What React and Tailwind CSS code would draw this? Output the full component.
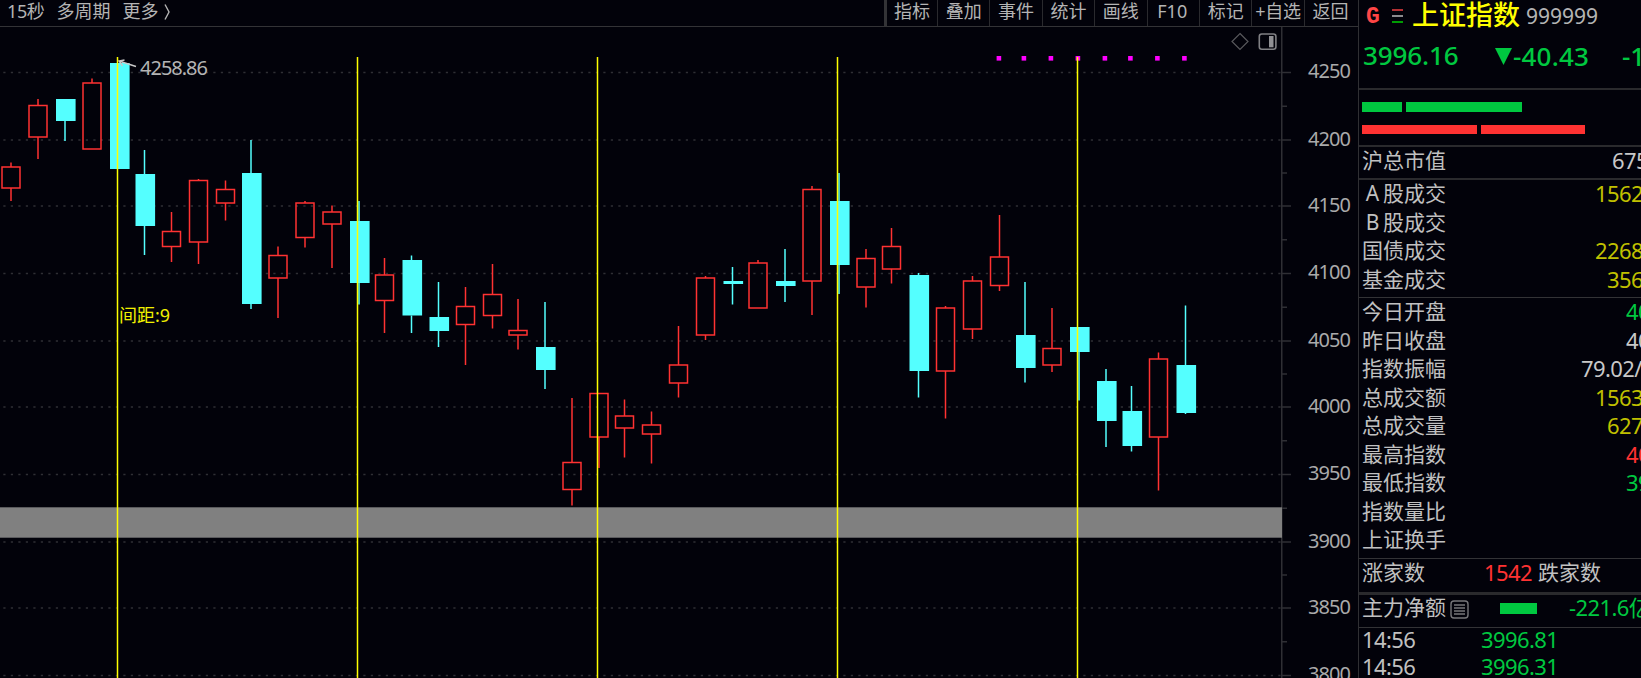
import clsx from 'clsx';

const UP = '#ff3232';
const DOWN = '#54ffff';

// [wick x, high, body top, body bottom, low, rising]
const CANDLES = [
  [11, 162.5, 167, 188, 201, 1],
  [38, 99, 105.5, 137, 159, 1],
  [65, 99, 99, 121, 141, 0],
  [92, 78.5, 83, 149, 149, 1],
  [119, 63, 63, 169, 169, 0],
  [144.5, 150, 174, 226, 255, 0],
  [171.5, 212, 231.5, 246.5, 262, 1],
  [198.5, 179, 180.5, 242, 264, 1],
  [225.5, 180.5, 189.5, 203, 220.5, 1],
  [251, 140, 173, 304, 309, 0],
  [278, 246.5, 255.5, 278, 318, 1],
  [305, 201, 203, 237.5, 247.5, 1],
  [332, 205.5, 212, 224, 268, 1],
  [359, 201, 221, 283, 304.5, 0],
  [384.5, 258, 275, 300.5, 333, 1],
  [411.5, 255.5, 260, 315.5, 333, 0],
  [438.5, 282, 317, 331, 347, 0],
  [465.5, 287, 306.5, 324.5, 365, 1],
  [492.5, 264, 294.5, 315.5, 328.5, 1],
  [518, 299, 330.5, 335, 349.5, 1],
  [545, 302, 347, 370, 389, 0],
  [572, 398, 462.5, 489.5, 505.5, 1],
  [599, 393.5, 393.5, 437, 468, 1],
  [624.5, 399.5, 416, 428, 457.5, 1],
  [651.5, 411.5, 425, 434, 463.5, 1],
  [678.5, 326, 365, 383, 397.5, 1],
  [705.5, 276, 278, 335, 340, 1],
  [732.5, 267, 281, 284, 304.5, 0],
  [758, 260, 263, 308, 308, 1],
  [785, 249, 281, 286, 302, 0],
  [812, 186, 189.5, 281, 315, 1],
  [839, 173, 201, 265, 294, 0],
  [866, 249, 258.5, 287, 307.5, 1],
  [891.5, 228, 246.5, 269, 283.5, 1],
  [918.5, 273, 275, 371, 397.5, 0],
  [945.5, 306, 308, 371, 418.5, 1],
  [972.5, 276, 281, 329, 339, 1],
  [999.5, 215, 257, 285.5, 291, 1],
  [1025, 282, 335, 368, 382.5, 0],
  [1052, 308, 348.5, 365, 372, 1],
  [1079, 327, 327, 352, 400.5, 0],
  [1106, 369, 381, 421, 447, 0],
  [1131.5, 386, 411, 446, 451.5, 0],
  [1158.5, 352.5, 359, 437, 490.5, 1],
  [1185.5, 305.5, 365, 413, 414, 0],
];

const LEVELS = [
  [4250, 72.5],
  [4200, 140],
  [4150, 206],
  [4100, 273.5],
  [4050, 341],
  [4000, 407],
  [3950, 474.5],
  [3900, 542],
  [3850, 608],
  [3800, 675.5],
];

const CYCLES = [117.5, 357.5, 597.5, 837.5, 1077.5];
const DOTS = [999, 1024, 1051, 1078, 1105, 1130.5, 1157.5, 1184.5];

const MENU = ['指标', '叠加', '事件', '统计', '画线', 'F10', '标记', '+自选', '返回'];

const TURNOVER = [
  { label: 'A股成交', value: '1562', cls: 'left-[236px] text-[#c0c000]' },
  { label: 'B股成交' },
  { label: '国债成交', value: '2268', cls: 'left-[236px] text-[#c0c000]' },
  { label: '基金成交', value: '356', cls: 'left-[248px] text-[#c0c000]' },
];

const QUOTES = [
  { label: '今日开盘', value: '40', cls: 'left-[267px] text-[#00c840]' },
  { label: '昨日收盘', value: '40', cls: 'left-[267px] text-[#c8c8c8]' },
  { label: '指数振幅', value: '79.02/', cls: 'left-[222px] text-[#c8c8c8]' },
  { label: '总成交额', value: '1563', cls: 'left-[236px] text-[#c0c000]' },
  { label: '总成交量', value: '627', cls: 'left-[248px] text-[#c0c000]' },
  { label: '最高指数', value: '40', cls: 'left-[267px] text-[#ff3232]' },
  { label: '最低指数', value: '39', cls: 'left-[267px] text-[#00c840]' },
  { label: '指数量比' },
  { label: '上证换手' },
];

const TICKS = [
  ['14:56', '3996.81'],
  ['14:56', '3996.31'],
];

function Candle({ data }) {
  const [x, high, top, bottom, low, rising] = data;
  const color = rising ? UP : DOWN;
  return (
    <g stroke={color} strokeWidth="1.5">
      {high < top && <line x1={x} x2={x} y1={high} y2={top} />}
      {low > bottom && <line x1={x} x2={x} y1={bottom} y2={low} />}
      {rising ? (
        <rect x={x - 9} y={top} width="18" height={bottom - top} fill="none" />
      ) : (
        <rect x={x - 9} y={top} width="19.6" height={bottom - top} fill={color} stroke="none" />
      )}
    </g>
  );
}

function Chart() {
  return (
    <svg className="block shrink-0" width="1358" height="651" viewBox="0 27 1358 651">
      {/* grid and price axis */}
      <g stroke="#2f2f34" strokeWidth="1.5">
        {LEVELS.map(([price, y], i) => (
          <g key={price}>
            <line x1="3.3" x2="1281" y1={y} y2={y} strokeDasharray="2.25 5.25" />
            <line x1="1282" x2="1291" y1={y} y2={y} />
            {i < LEVELS.length - 1 && (
              <line x1="1282" x2="1287" y1={(y + LEVELS[i + 1][1]) / 2} y2={(y + LEVELS[i + 1][1]) / 2} />
            )}
          </g>
        ))}
        <line x1="1281.75" x2="1281.75" y1="27" y2="678" />
      </g>
      <g fill="#aaaaaa" fontSize="20">
        {LEVELS.map(([price, y]) => (
          <text key={price} x="1308" y={y + 5.5} textLength="43">{price}</text>
        ))}
      </g>

      {/* support band */}
      <rect x="0" y="507.3" width="1282" height="30.4" fill="#808080" />

      {CANDLES.map((c) => <Candle key={c[0]} data={c} />)}

      {DOTS.map((x) => (
        <rect key={x} x={x - 2.4} y="56" width="4.6" height="4.6" fill="#ff00ff" />
      ))}

      {CYCLES.map((x) => (
        <line key={x} x1={x} x2={x} y1="57" y2="678" stroke="#ffff00" strokeWidth="1.5" />
      ))}

      <path d="M136 66.5 L119 61 M124.5 60 L119 61 L122.5 66" fill="none" stroke="#c8c8c8" strokeWidth="1.4" />
      <text x="140" y="75" fontSize="20" fill="#b4b4b4" textLength="68">4258.86</text>
      <text x="119" y="322" fontSize="18" fill="#f0f000" textLength="51">间距:9</text>

      <path d="M1240 33.5 L1248 41.5 L1240 49.5 L1232 41.5 Z" fill="none" stroke="#58585c" strokeWidth="1.2" />
      <rect x="1259.3" y="34" width="16.6" height="15.2" rx="2.5" fill="none" stroke="#808084" strokeWidth="1.6" />
      <rect x="1269" y="36" width="4.5" height="11.3" fill="#909094" />
    </svg>
  );
}

function Toolbar() {
  return (
    <div className="flex h-[27px] shrink-0 justify-between border-b border-[#333336] text-[18px] leading-[23px] text-[#b4b4b4]">
      <div className="flex gap-[12px] pl-[7px] whitespace-nowrap">
        <span className="tracking-[-0.4px]">15秒</span>
        <span>多周期</span>
        <span className="flex items-start">
          更多
          <svg className="mt-[3px] ml-[6px]" width="7" height="18" viewBox="0 0 7 18">
            <path d="M1 1.5 L5 9 L1 16.5" fill="none" stroke="#b4b4b4" strokeWidth="1.4" />
          </svg>
        </span>
      </div>
      <div className="flex w-[474px] border-l-[3px] border-[#333336]">
        {MENU.map((item, i) => (
          <div
            key={item}
            className={clsx(
              'flex shrink-0 justify-center whitespace-nowrap',
              i === 0 && 'w-[50px]',
              i > 0 && 'w-[52.4px] border-l border-[#2a2a2e]',
              item === 'F10' && 'pr-0.5',
              item === '+自选' && 'tracking-[-0.3px]',
            )}
          >
            {item}
          </div>
        ))}
      </div>
    </div>
  );
}

function Row({ label, value, cls }) {
  return (
    <div className="relative h-[28.5px] pl-[3px] text-[21px] leading-[26px] text-[#c0c0c0]">
      {/^[AB]/.test(label) ? (
        <span>
          <span className="inline-block w-[21px] text-center">{label[0]}</span>
          {label.slice(1)}
        </span>
      ) : label}
      {value && (
        <span className={clsx('absolute top-0 text-[22px] tracking-[-0.6px]', cls)}>{value}</span>
      )}
    </div>
  );
}

function QuotePanel() {
  return (
    <aside className="flex flex-1 flex-col overflow-hidden border-l border-[#2f2f33] whitespace-nowrap">
      <div className="h-[90px] shrink-0 border-b-2 border-[#2a2a2d]">
        <div className="flex h-8 items-center pl-[7px]">
          <span className="w-[26px] pt-0.5 font-['Liberation_Mono'] text-[23px] leading-7 font-bold text-[#ff4646]">G</span>
          <svg className="shrink-0" width="11" height="14" viewBox="0 0 11 14" strokeWidth="1.4">
            <path d="M0 1 H11" stroke="#ff4646" />
            <path d="M0 7 H11" stroke="#c8c8c8" />
            <path d="M0 13 H11" stroke="#00e000" />
          </svg>
          <span className="ml-[9px] pb-0.5 text-[27px] leading-[30px] font-medium text-[#ffff00]">上证指数</span>
          <span className="ml-[6px] text-[21px] leading-8 text-[#b4b4b4]">999999</span>
        </div>
        <div className="flex h-12 items-center pl-1 text-[26px] font-medium text-[#00c840]">
          <span className="w-[132px] shrink-0 pb-0.5 tracking-[-0.1px]">3996.16</span>
          <svg className="shrink-0" width="17" height="17" viewBox="0 0 17 17">
            <path d="M0 0 H17 L8.5 17 Z" fill="#00c840" />
          </svg>
          <span className="ml-px w-[109px] shrink-0 tracking-[0.2px]">-40.43</span>
          <span>-1</span>
        </div>
      </div>

      <div className="flex h-[57px] shrink-0 flex-col gap-[13px] border-b-2 border-[#2a2a2d] pt-3 pl-[3px]">
        <div className="flex h-[10px] gap-1">
          <div className="w-[39.5px] bg-[#00c840]" />
          <div className="w-[116px] bg-[#00c840]" />
        </div>
        <div className="flex h-[9px] gap-1">
          <div className="w-[115px] bg-[#ff3232]" />
          <div className="w-[104px] bg-[#ff3232]" />
        </div>
      </div>

      <div className="h-[33px] shrink-0 border-b-2 border-[#2a2a2d]">
        <Row label="沪总市值" value="675" cls="left-[253px] text-[#c8c8c8]" />
      </div>
      <div className="h-[118px] shrink-0 border-b border-[#333336]">
        {TURNOVER.map((r) => <Row key={r.label} {...r} />)}
      </div>
      <div className="h-[261px] shrink-0 border-b border-[#333336]">
        {QUOTES.map((r) => <Row key={r.label} {...r} />)}
      </div>

      <div className="flex h-[36px] shrink-0 border-b-[3px] border-[#2a2a2d] pl-[3px] text-[21px] leading-[27px] text-[#c0c0c0]">
        <span className="w-[122px]">涨家数</span>
        <span className="w-[54px] text-[22px] tracking-[-0.6px] text-[#ff3232]">1542</span>
        <span>跌家数</span>
      </div>
      <div className="flex h-[33px] shrink-0 border-b border-[#333336] pl-[3px] text-[21px] leading-[25px] text-[#c0c0c0]">
        <span className="shrink-0">主力净额</span>
        <svg className="mt-[5px] ml-1 shrink-0" width="19" height="19" viewBox="0 0 19 19" fill="none" stroke="#77777a">
          <rect x="1" y="1" width="17" height="17" rx="3" strokeWidth="1.4" />
          <path d="M4 5 H15 M4 8 H15 M4 11 H15 M4 14 H15" strokeWidth="1.4" />
        </svg>
        <div className="mt-[8px] ml-[31px] h-[11px] w-[37px] shrink-0 bg-[#00c840]" />
        <span className="ml-8 shrink-0 text-[22px] tracking-[-0.6px] text-[#00c840]">-221.6亿</span>
      </div>
      {TICKS.map(([time, price]) => (
        <div key={price} className="flex h-[26.7px] shrink-0 pl-[3px] text-[22px] leading-[22px] tracking-[-0.6px] text-[#c0c0c0]">
          <span className="w-[119px]">{time}</span>
          <span className="text-[#00c840]">{price}</span>
        </div>
      ))}
    </aside>
  );
}

export default function App() {
  return (
    <div className="flex h-[678px] w-[1641px] overflow-hidden bg-[#02020a] font-['Noto_Sans','Noto_Sans_CJK_SC',sans-serif]">
      <main className="flex w-[1358px] shrink-0 flex-col">
        <Toolbar />
        <Chart />
      </main>
      <QuotePanel />
    </div>
  );
}
